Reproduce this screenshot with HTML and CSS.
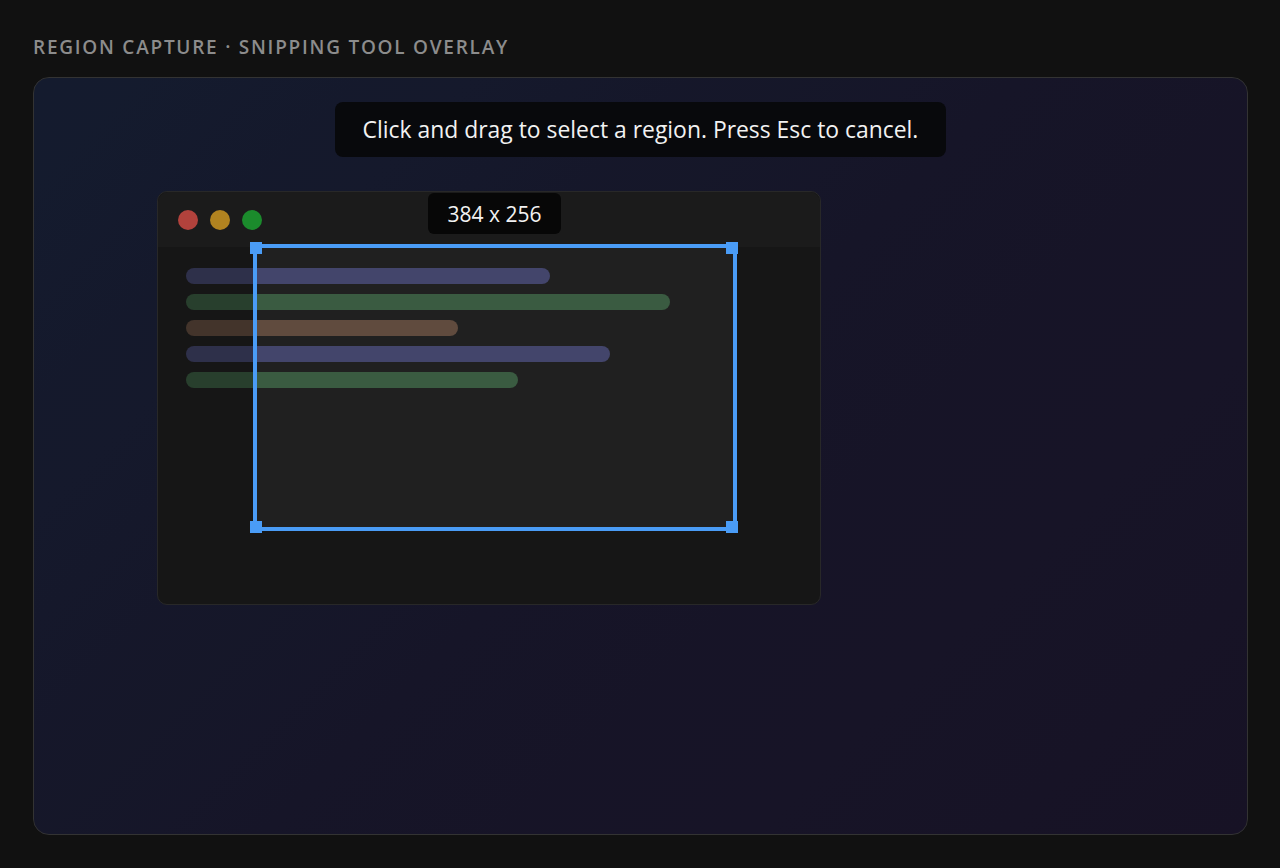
FILE: index.html
```html
<!DOCTYPE html>
<html lang="en">
<head>
<meta charset="utf-8">
<title>Region Capture</title>
<link rel="stylesheet" href="styles.css">
</head>
<body>
<main class="page">
  <h1 class="heading">Region capture · Snipping tool overlay</h1>
  <section class="canvas">
    <div class="toast">Click and drag to select a region. Press Esc to cancel.</div>
    <div class="window">
      <div class="titlebar">
        <span class="light light-red"></span>
        <span class="light light-yellow"></span>
        <span class="light light-green"></span>
      </div>
      <div class="content">
        <div class="bar bar-purple bar-w364"></div>
        <div class="bar bar-green bar-w484"></div>
        <div class="bar bar-brown bar-w272"></div>
        <div class="bar bar-purple bar-w424"></div>
        <div class="bar bar-green bar-w332"></div>
      </div>
      <div class="size-label">384 x 256</div>
      <div class="selection">
        <span class="handle handle-tl"></span>
        <span class="handle handle-tr"></span>
        <span class="handle handle-bl"></span>
        <span class="handle handle-br"></span>
      </div>
    </div>
  </section>
</main>
</body>
</html>
```
FILE: styles.css
```css
* { box-sizing: border-box; }
html, body { margin: 0; padding: 0; }
body {
  background: #111111;
  font-family: "Segoe UI", "Open Sans", "Noto Sans", sans-serif;
  color: #eee;
}
.page {
  padding: 35px 32px 32px 32px;
}
.heading {
  margin: 0 0 18px 1px;
  font-size: 19px;
  line-height: 24px;
  font-weight: 600;
  letter-spacing: 1.75px;
  text-transform: uppercase;
  color: #8c8c8c;
}
.canvas {
  position: relative;
  isolation: isolate;
  height: 758px;
  margin-left: 1px;
  border: 1px solid #333333;
  border-radius: 16px;
  overflow: hidden;
  background: linear-gradient(135deg, #1e2843 0%, #201f3a 50%, #221b36 100%);
  display: flex;
  flex-direction: column;
  align-items: flex-start;
}
.toast {
  position: relative;
  z-index: 3;
  align-self: center;
  margin-top: 24px;
  height: 55px;
  padding: 0 28px;
  display: flex;
  align-items: center;
  background: #08090c;
  border-radius: 8px;
  font-size: 22.9px;
  color: #f2f2f2;
  white-space: nowrap;
}
.window {
  position: relative;
  margin: 34px 0 0 123px;
  width: 664px;
  height: 414px;
  border: 1px solid #3a3a3a;
  border-radius: 10px;
  background: #202020;
}
.titlebar {
  height: 55px;
  padding-left: 20px;
  display: flex;
  align-items: center;
  gap: 12px;
  background: #272727;
  border-radius: 10px 10px 0 0;
}
.light {
  width: 20px;
  height: 20px;
  border-radius: 50%;
}
.light-red { background: #ff5f57; }
.light-yellow { background: #febc2e; }
.light-green { background: #28c840; }
.content {
  padding: 21px 28px;
  display: flex;
  flex-direction: column;
  gap: 10px;
}
.bar {
  height: 16px;
  border-radius: 8px;
}
.bar-purple { background: #43456b; }
.bar-green { background: #3a5b41; }
.bar-brown { background: #604b3e; }
.bar-w364 { width: 364px; }
.bar-w484 { width: 484px; }
.bar-w272 { width: 272px; }
.bar-w424 { width: 424px; }
.bar-w332 { width: 332px; }
.size-label {
  position: absolute;
  z-index: 3;
  left: 270px;
  top: 1px;
  width: 133px;
  height: 41px;
  display: flex;
  align-items: center;
  justify-content: center;
  background: #070707;
  border-radius: 6px;
  font-size: 21px;
  color: #f2f2f2;
}
.selection {
  position: absolute;
  z-index: 2;
  left: 95px;
  top: 52px;
  width: 484px;
  height: 287px;
  border: 4px solid #4a9cf6;
  box-shadow: 0 0 0 3000px rgba(0, 0, 0, 0.3);
}
.handle {
  position: absolute;
  width: 12px;
  height: 12px;
  background: #4a9cf6;
}
.handle-tl { left: -7px; top: -6px; }
.handle-tr { right: -5px; top: -6px; }
.handle-bl { left: -7px; bottom: -6px; }
.handle-br { right: -5px; bottom: -6px; }
```
